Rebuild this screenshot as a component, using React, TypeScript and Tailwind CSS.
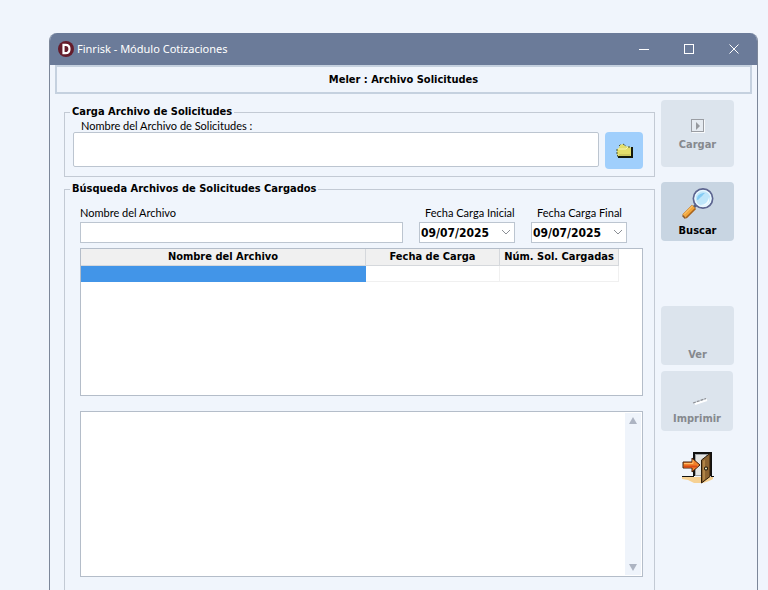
import { useState } from 'react';
import type { ReactNode } from 'react';

function AppLogo() {
    return (
        <svg width="16" height="16" viewBox="0 0 16 16" aria-hidden="true">
            <circle cx="8" cy="8" r="8" fill="#641c2b" />
            <path d="M5.5 3.8h2c2.600 0 4 1.400 4 4.200s-1.400 4.200-4 4.200h-2z" fill="none" stroke="#fff" strokeWidth="2.200" />
        </svg>
    );
}

function FolderIcon() {
    return (
        <svg width="17" height="16" viewBox="0 0 17 16" aria-hidden="true">
            <path d="M2 14h14V4" fill="none" stroke="#14180a" strokeWidth="2" />
            <path d="M1 6l2-1 1-3 3-1 2 2 5 1 1 1v8H2L1 11z" fill="#e3de6c" />
            <path d="M1 6v5l1 3M3 3l2-2M7 1l3 2M12 4h3" fill="none" stroke="#4b5430" strokeDasharray="2 1" />
            <path d="M2 6h8l2-2" fill="none" stroke="#f7f5b4" />
            <path d="M3 12h11" stroke="#b9b552" />
        </svg>
    );
}

function PlayBoxIcon() {
    return (
        <svg width="14" height="14" viewBox="0 0 14 14" aria-hidden="true">
            <rect x="1.5" y="1.5" width="12" height="12" fill="none" stroke="#f8fafc" />
            <rect x="0.5" y="0.5" width="12" height="12" fill="#e6ebf1" stroke="#9a9da3" />
            <path d="M5 3v8l4-4z" fill="#96999e" />
        </svg>
    );
}

function SearchIcon() {
    return (
        <svg width="34" height="34" viewBox="0 0 34 34" aria-hidden="true">
            <path d="M15 18l-3 3" stroke="#5b6378" strokeWidth="3" />
            <path d="M13 20L3.500 29.500" stroke="#a8641d" strokeWidth="6" />
            <path d="M12.500 19.500L3 29" stroke="#f2a63b" strokeWidth="4" />
            <path d="M11.500 19L3 27.500" stroke="#fbd083" strokeWidth="1" />
            <path d="M1.500 28.500l3 3" stroke="#8a5726" strokeWidth="1.500" />
            <circle cx="22" cy="11.500" r="9.500" fill="#bfe6fa" stroke="#5d6590" strokeWidth="2" />
            <circle cx="22" cy="11.500" r="8" fill="none" stroke="#e9f7fe" strokeWidth="1.500" />
            <path d="M16 13c0-5 3-7 8-7-2 1-2 3-4 4s-2 3-4 3z" fill="#83cbf4" />
            <path d="M19 18c5 0 8-3 9-8 2 5-3 11-9 8z" fill="#f1fbff" />
        </svg>
    );
}

function PrinterIcon() {
    return (
        <svg width="22" height="8" viewBox="0 0 22 8" aria-hidden="true">
            <path d="M9 7l12-4" stroke="#fff" strokeWidth="2" />
            <path d="M7 6L20 1.500" stroke="#8d8f94" strokeWidth="1.200" strokeDasharray="3 1" />
        </svg>
    );
}

function ExitIcon() {
    return (
        <svg width="32" height="34" viewBox="0 0 32 34" aria-hidden="true">
            <path d="M0 26h31v2l-4 2-6 2H12l-6-3-6-1z" fill="#f6d193" />
            <path d="M0 25.500h12" stroke="#111" />
            <path d="M29 25.500h3" stroke="#111" />
            <path d="M12 25V2h17v23" fill="#9fa2a6" stroke="#111" strokeWidth="2" />
            <path d="M14 24V4h10v20z" fill="#e4e5e3" />
            <path d="M19.500 9L28 2.500v23L19.500 32z" fill="#8c6332" stroke="#2a1a08" />
            <path d="M21 10l2-1.500V28l-2 2z" fill="#b08447" />
            <circle cx="24" cy="17.500" r="2" fill="#17120b" />
            <circle cx="24" cy="17.500" r="1" fill="#fff6c8" />
            <path d="M1 11h9V7l8 7-8 7v-4H1z" fill="#f3812a" stroke="#43200d" />
            <path d="M2 12.500h9V9" fill="none" stroke="#ffbe6a" />
            <path d="M2 15.500h13" stroke="#dc4c16" strokeWidth="2" />
        </svg>
    );
}

function SideButton({ label, icon, disabled, className }: { label: string; icon?: ReactNode; disabled?: boolean; className: string }) {
    return (
        <button
            type="button"
            disabled={disabled}
            className={`flex flex-col items-center justify-end rounded font-bold leading-4 ${disabled ? 'bg-[#dce4ed] text-[#86898e]' : 'bg-[#c8d5e2] text-black'} ${className}`}
        >
            {icon}
            {label}
        </button>
    );
}

function DateField({ id, label }: { id: string; label: string }) {
    return (
        <div className="w-24">
            <label htmlFor={id} className="block pl-1.5 font-[Lato,sans-serif] leading-4 whitespace-nowrap">{label}</label>
            <div className="relative mt-px">
                <select id={id} className="block h-[21px] w-full appearance-none border border-[#bcc5d0] bg-white pl-px text-xs font-bold">
                    <option>09/07/2025</option>
                </select>
                <svg className="pointer-events-none absolute top-[7px] right-1" width="10" height="7" viewBox="0 0 10 7" aria-hidden="true">
                    <path d="M1 1l4 4 4-4" fill="none" stroke="#8b8f95" />
                </svg>
            </div>
        </div>
    );
}

function TitleBar() {
    return (
        <header className="flex h-8 shrink-0 items-center bg-[#6b7b99] pl-2 text-white">
            <AppLogo />
            <h1 className="flex-1 pl-[3px] font-['Noto_Sans',sans-serif] text-[11px]">Finrisk - Módulo Cotizaciones</h1>
            <button type="button" aria-label="Minimizar" className="flex h-full w-[45px] items-center justify-center">
                <svg width="11" height="11" viewBox="0 0 11 11"><path d="M0 5.500h10" stroke="#fff" /></svg>
            </button>
            <button type="button" aria-label="Maximizar" className="flex h-full w-[45px] items-center justify-center">
                <svg width="11" height="11" viewBox="0 0 11 11"><rect x="0.500" y="0.500" width="9" height="9" fill="none" stroke="#fff" /></svg>
            </button>
            <button type="button" aria-label="Cerrar" className="flex h-full w-[45px] items-center justify-center">
                <svg width="11" height="11" viewBox="0 0 11 11"><path d="M0.500 0.500l9 9M9.500 0.500l-9 9" stroke="#fff" /></svg>
            </button>
        </header>
    );
}

function SearchResults() {
    return (
        <div className="mt-[5px] h-[148px] border border-[#b4bdc9] bg-white pr-[23px]">
            <table className="w-full table-fixed border-collapse">
                <thead>
                    <tr className="h-4 bg-[#f0f0f0] leading-4">
                        <th className="border-r border-b border-[#d5d8dc] p-0">Nombre del Archivo</th>
                        <th className="w-[134px] border-r border-b border-[#d5d8dc] p-0">Fecha de Carga</th>
                        <th className="w-[119px] border-r border-b border-[#d5d8dc] p-0">Núm. Sol. Cargadas</th>
                    </tr>
                </thead>
                <tbody>
                    <tr className="h-4">
                        <td className="bg-[#4295e8] p-0"></td>
                        <td className="border-r border-b border-[#f0f0f0] p-0"></td>
                        <td className="border-r border-b border-[#f0f0f0] p-0"></td>
                    </tr>
                </tbody>
            </table>
        </div>
    );
}

function DetailBox() {
    return (
        <div className="mt-[15px] flex h-[166px] border border-[#b4bdc9] bg-white">
            <textarea aria-label="Detalle" className="flex-1 resize-none outline-none" />
            <div className="my-px mr-px flex w-4 flex-col items-center justify-between bg-[#eff4fb] py-1">
                <button type="button" aria-label="Subir">
                    <svg width="10" height="7" viewBox="0 0 10 7"><path d="M5 0l4 7H1z" fill="#adb4c2" /></svg>
                </button>
                <button type="button" aria-label="Bajar">
                    <svg width="10" height="7" viewBox="0 0 10 7"><path d="M1 0h8L5 7z" fill="#adb4c2" /></svg>
                </button>
            </div>
        </div>
    );
}

export default function App() {
    const [path, setPath] = useState('');
    const [name, setName] = useState('');

    return (
        <div className="flex min-h-screen flex-col bg-[#f0f5fc] pt-[33px] pr-2.5 pl-[49px] font-['DejaVu_Sans_Condensed','DejaVu_Sans',sans-serif] text-[11px] text-black">
            <div className="flex flex-1 flex-col overflow-hidden rounded-t-lg border-x border-[#7c8799]">
                <TitleBar />
                <h2 className="mx-[5px] flex h-[29px] items-center justify-center border-2 border-[#c5d1df] pt-0.5 font-bold">Meler : Archivo Solicitudes</h2>

                <main className="flex flex-1 pr-[23px] pl-3.5">
                    <div className="flex flex-1 flex-col pt-2.5">
                        <fieldset className="border border-[#c3cad4] px-2 pb-[7px]">
                            <legend className="-ml-[3px] px-0.5 leading-4 font-bold">Carga Archivo de Solicitudes</legend>
                            <label htmlFor="path" className="block pl-2 font-[Lato,sans-serif] leading-3">Nombre del Archivo de Solicitudes :</label>
                            <div className="flex gap-1.5 pr-[3px]">
                                <input id="path" value={path} onChange={(e) => setPath(e.target.value)} className="h-[35px] min-w-0 flex-1 rounded-xs border border-[#bcc5d0] bg-white px-1" />
                                <button type="button" aria-label="Abrir archivo" className="flex h-[37px] w-[38px] items-center justify-center rounded bg-[#a0cffc]">
                                    <FolderIcon />
                                </button>
                            </div>
                        </fieldset>

                        <fieldset className="mt-1 flex-1 border border-b-0 border-[#c3cad4] pr-[11px] pl-[15px]">
                            <legend className="-ml-2.5 px-0.5 leading-4 font-bold">Búsqueda Archivos de Solicitudes Cargados</legend>
                            <div className="flex gap-4 pt-2 pr-4">
                                <div className="flex-1">
                                    <label htmlFor="name" className="block font-[Lato,sans-serif] leading-4">Nombre del Archivo</label>
                                    <input id="name" value={name} onChange={(e) => setName(e.target.value)} className="mt-px block h-[21px] w-full border border-[#bcc5d0] bg-white px-1" />
                                </div>
                                <DateField id="from" label="Fecha Carga Inicial" />
                                <DateField id="to" label="Fecha Carga Final" />
                            </div>
                            <SearchResults />
                            <DetailBox />
                        </fieldset>
                    </div>

                    <nav className="ml-1.5 flex w-[73px] flex-col pt-1.5">
                        <SideButton label="Cargar" disabled icon={<PlayBoxIcon />} className="h-[67px] gap-1 pb-3.5" />
                        <SideButton label="Buscar" icon={<SearchIcon />} className="mt-[15px] h-[59px] gap-0.5 pb-0.5" />
                        <SideButton label="Ver" disabled className="mt-[65px] h-[59px] pb-0.5" />
                        <SideButton label="Imprimir" disabled icon={<PrinterIcon />} className="mt-1.5 mr-px h-[60px] gap-1.5 pb-1" />
                        <button type="button" aria-label="Salir" className="mt-5 self-center">
                            <ExitIcon />
                        </button>
                    </nav>
                </main>
            </div>
        </div>
    );
}
